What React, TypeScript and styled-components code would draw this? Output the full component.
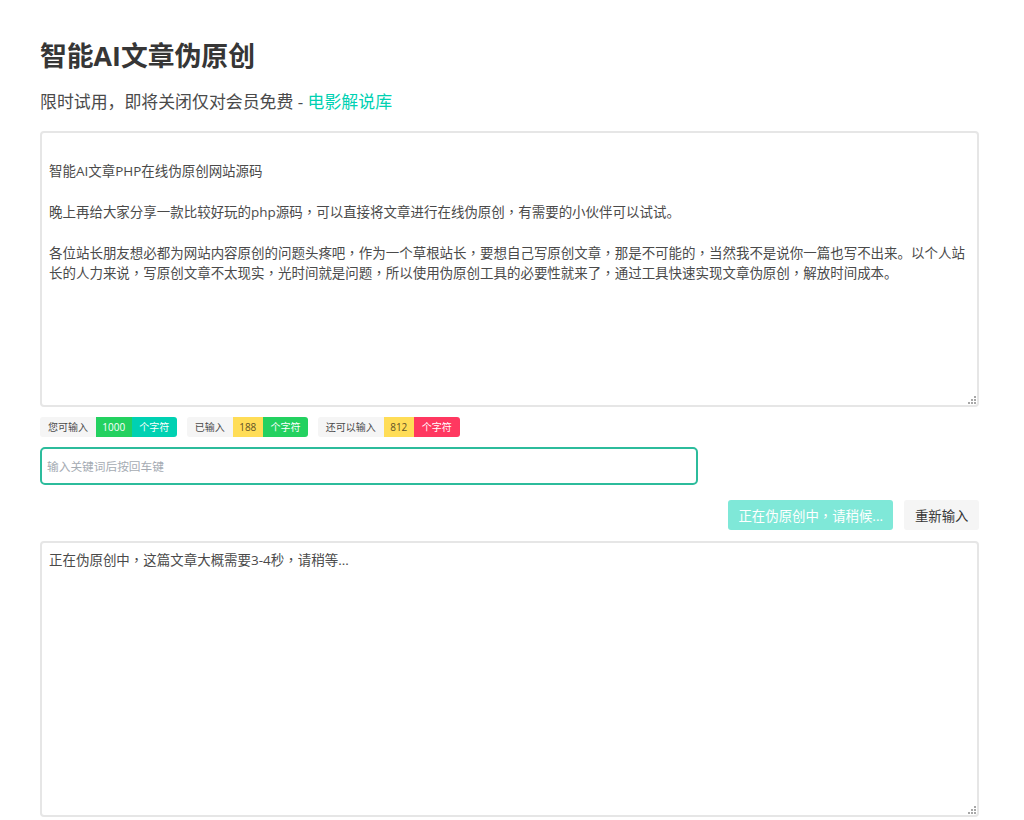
import React from "react";
import styled, { createGlobalStyle } from "styled-components";

const Global = createGlobalStyle`
  html, body { margin: 0; padding: 0; background: #fff; }
  body { font-family: "Open Sans", "Noto Sans CJK SC", sans-serif; color: #4a4a4a; }
  * { box-sizing: border-box; }
`;

const Page = styled.main`
  width: 1024px;
  height: 820px;
  overflow: hidden;
  padding: 38px 45px 0 40px;
  display: flex;
  flex-direction: column;
`;

const Title = styled.h1`
  margin: 0;
  font-size: 26.8px;
  line-height: 36px;
  font-weight: 700;
  color: #363636;
`;

const Subtitle = styled.h2`
  margin: 13px 0 0;
  font-size: 16.9px;
  line-height: 30px;
  font-weight: 400;
  color: #4a4a4a;
`;

const Link = styled.a`
  color: #00d1b2;
  text-decoration: none;
`;

const Editor = styled.div<{ $top: number }>`
  position: relative;
  flex: none;
  width: 100%;
  height: 276px;
  margin-top: ${(p) => p.$top}px;
  padding: 7px 7px;
  border: 2px solid #e6e6e6;
  border-radius: 4px;
  background: #fff;
  color: #4a4a4a;
  font-size: 13.47px;
  line-height: 20.5px;
  white-space: pre-wrap;
`;

const Comma = styled.span`
  font-family: "Noto Sans CJK TC", sans-serif;
  line-height: 0;
`;

const Grip = styled.svg`
  position: absolute;
  right: 1px;
  bottom: 1px;
  width: 8px;
  height: 8px;
  fill: #a8a8a8;
`;

const Tags = styled.div`
  display: flex;
  gap: 10px;
  margin-top: 10px;
`;

const TagGroup = styled.div`
  display: flex;
  height: 20px;
`;

const Tag = styled.span<{ $bg: string; $fg: string; $w: number }>`
  display: flex;
  align-items: center;
  justify-content: center;
  width: ${(p) => p.$w}px;
  background: ${(p) => p.$bg};
  color: ${(p) => p.$fg};
  font-size: 10px;
  line-height: 20px;
  &:first-child { border-radius: 3px 0 0 3px; }
  &:last-child { border-radius: 0 3px 3px 0; }
`;

const KeywordInput = styled.input`
  display: block;
  width: 657.5px;
  height: 38px;
  margin-top: 10px;
  padding: 0 5px;
  border: 2px solid #2cbc9c;
  border-radius: 5px;
  outline: none;
  background: #fff;
  color: #4a4a4a;
  font-family: inherit;
  font-size: 11.7px;
  &::placeholder { color: #a5abb3; opacity: 1; }
`;

const Actions = styled.div`
  display: flex;
  justify-content: flex-end;
  gap: 11px;
  margin-top: 15px;
`;

const Button = styled.button<{ $primary?: boolean }>`
  height: 30px;
  padding: 0 10.5px;
  border: 0;
  border-radius: 3px;
  background: ${(p) => (p.$primary ? "#7fe8d8" : "#f5f5f5")};
  color: ${(p) => (p.$primary ? "#fff" : "#363636")};
  font-family: inherit;
  font-size: 13.4px;
  white-space: nowrap;
`;

const sourceText = `
智能AI文章PHP在线伪原创网站源码

晚上再给大家分享一款比较好玩的php源码，可以直接将文章进行在线伪原创，有需要的小伙伴可以试试。

各位站长朋友想必都为网站内容原创的问题头疼吧，作为一个草根站长，要想自己写原创文章，那是不可能的，当然我不是说你一篇也写不出来。以个人站长的人力来说，写原创文章不太现实，光时间就是问题，所以使用伪原创工具的必要性就来了，通过工具快速实现文章伪原创，解放时间成本。`;

const tags = [
  { label: "您可输入", lw: 56, value: "1000", vw: 35.5, vbg: "#23d160", vfg: "#fff", ubg: "#00d1b2", uw: 45.5 },
  { label: "已输入", lw: 45.5, value: "188", vw: 30.5, vbg: "#ffdd57", vfg: "#5f5326", ubg: "#23d160", uw: 45 },
  { label: "还可以输入", lw: 65.5, value: "812", vw: 30.5, vbg: "#ffdd57", vfg: "#5f5326", ubg: "#ff3860", uw: 45.5 },
];

function withCommas(text: string) {
  return text.split("，").map((part, i) => (
    <React.Fragment key={i}>
      {i > 0 && <Comma>，</Comma>}
      {part}
    </React.Fragment>
  ));
}

function ResizeGrip() {
  return (
    <Grip viewBox="0 0 8 8" aria-hidden="true">
      <rect x="6" y="0" width="2" height="2" />
      <rect x="3" y="3" width="2" height="2" />
      <rect x="6" y="3" width="2" height="2" />
      <rect x="0" y="6" width="2" height="2" />
      <rect x="3" y="6" width="2" height="2" />
      <rect x="6" y="6" width="2" height="2" />
    </Grip>
  );
}

export default function App() {
  return (
    <Page>
      <Global />
      <Title>智能AI文章伪原创</Title>
      <Subtitle>
        限时试用，即将关闭仅对会员免费 - <Link href="#">电影解说库</Link>
      </Subtitle>
      <Editor $top={14} role="textbox">
        {withCommas(sourceText)}
        <ResizeGrip />
      </Editor>
      <Tags>
        {tags.map((t) => (
          <TagGroup key={t.label}>
            <Tag $bg="#f5f5f5" $fg="#4a4a4a" $w={t.lw}>{t.label}</Tag>
            <Tag $bg={t.vbg} $fg={t.vfg} $w={t.vw}>{t.value}</Tag>
            <Tag $bg={t.ubg} $fg="#fff" $w={t.uw}>个字符</Tag>
          </TagGroup>
        ))}
      </Tags>
      <KeywordInput placeholder="输入关键词后按回车键" />
      <Actions>
        <Button $primary>{withCommas("正在伪原创中，请稍候...")}</Button>
        <Button>重新输入</Button>
      </Actions>
      <Editor $top={11} role="textbox">
        {withCommas("正在伪原创中，这篇文章大概需要3-4秒，请稍等...")}
        <ResizeGrip />
      </Editor>
    </Page>
  );
}
